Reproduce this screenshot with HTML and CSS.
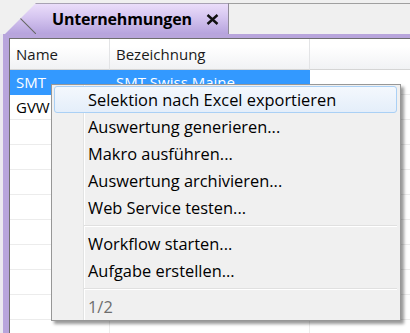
FILE: index.html
```html
<!DOCTYPE html>
<html lang="de">
<head>
    <meta charset="UTF-8">
    <title>Unternehmungen</title>
    <link rel="stylesheet" href="styles.css">
</head>
<body>
    <div class="window">
        <div class="tabbar">
            <div class="tab">
                <span class="tab-title">Unternehmungen</span>
                <svg class="tab-close" width="13" height="11" viewBox="0 0 13 11">
                    <path d="M1.5 1 L11.5 10 M11.5 1 L1.5 10" stroke="#111" stroke-width="2.4" fill="none"/>
                </svg>
            </div>
            <div class="tabbar-rest"></div>
        </div>
        <div class="frame">
            <div class="grid">
                <div class="cell head">Name</div>
                <div class="cell head">Bezeichnung</div>
                <div class="cell head filler"></div>

                <div class="cell selected">SMT</div>
                <div class="cell selected">SMT Swiss Maine</div>
                <div class="cell filler"></div>

                <div class="cell">GVW</div>
                <div class="cell">GVW Gesellschaft</div>
                <div class="cell filler"></div>

                <div class="cell"></div><div class="cell"></div><div class="cell filler"></div>
                <div class="cell"></div><div class="cell"></div><div class="cell filler"></div>
                <div class="cell"></div><div class="cell"></div><div class="cell filler"></div>
                <div class="cell"></div><div class="cell"></div><div class="cell filler"></div>
                <div class="cell"></div><div class="cell"></div><div class="cell filler"></div>
                <div class="cell"></div><div class="cell"></div><div class="cell filler"></div>
                <div class="cell"></div><div class="cell"></div><div class="cell filler"></div>
                <div class="cell"></div><div class="cell"></div><div class="cell filler"></div>
                <div class="cell"></div><div class="cell"></div><div class="cell filler"></div>
            </div>
        </div>

        <div class="menu">
            <div class="menu-item active">Selektion nach Excel exportieren</div>
            <div class="menu-item">Auswertung generieren...</div>
            <div class="menu-item">Makro ausführen...</div>
            <div class="menu-item">Auswertung archivieren...</div>
            <div class="menu-item">Web Service testen...</div>
            <div class="menu-sep"></div>
            <div class="menu-item">Workflow starten...</div>
            <div class="menu-item">Aufgabe erstellen...</div>
            <div class="menu-sep"></div>
            <div class="menu-item disabled">1/2</div>
        </div>
    </div>
</body>
</html>
```

FILE: styles.css
```css
body {
    margin: 0;
    background: #ebe9f0;
    font-family: "Open Sans", "Noto Sans", sans-serif;
    color: #000;
    overflow: hidden;
}

.window {
    position: relative;
    width: 410px;
    height: 333px;
}

/* Tab-Leiste */
.tabbar {
    display: flex;
    height: 34px;
    padding-left: 5px;
    background: #f0f0f0;
}

.tab {
    position: relative;
    display: flex;
    align-items: center;
    width: 224px;
    height: 31px;
    margin-top: 3px;
    padding-left: 47px;
    box-sizing: border-box;
    background: linear-gradient(#ecdffb, #d6c6f0 45%, #b6a3dd);
    clip-path: polygon(0 100%, 31px 0, 100% 0, 100% 100%);
    box-shadow: inset -1px 0 #8f8a98, inset 0 1px #a8a2b4;
}

.tab::before {
    content: '';
    position: absolute;
    left: 0;
    top: 0;
    width: 31px;
    height: 31px;
    background: linear-gradient(to top right, transparent calc(50% - 1px), #6b6b6b 50%, transparent calc(50% + 1px));
}

.tab-title {
    font-weight: bold;
    font-size: 16px;
    letter-spacing: -0.2px;
}

.tab-close {
    margin-left: 14px;
    margin-top: 2px;
}

.tabbar-rest {
    flex: 1;
    margin-top: 3px;
    border-top: 1px solid #a0a0a0;
}

/* Rahmen um die Tabelle */
.frame {
    margin-left: 3px;
    padding: 4px 0 0 6px;
    background: #b8a5dc;
    height: 299px;
    box-sizing: border-box;
}

.grid {
    display: grid;
    grid-template-columns: 100px 200px 1fr;
    grid-auto-rows: 25px;
    grid-template-rows: 31px;
    height: 100%;
    overflow: hidden;
    background: #fff;
    border-left: 1px solid #6e6e6e;
    border-top: 1px solid #6e6e6e;
    font-size: 15px;
}

.cell {
    display: flex;
    align-items: center;
    padding-left: 6px;
    border-right: 1px solid #ececec;
    border-bottom: 1px solid #ececec;
    white-space: nowrap;
    overflow: hidden;
}

.cell.filler {
    border-right: none;
}

.head {
    background: linear-gradient(#fff, #fff 25%, #f1f2f4);
    border-right-color: #e3e4e6;
    border-bottom-color: #d5d5d5;
    color: #1a1a1a;
}

.selected {
    background: #3399ff;
    color: #fff;
    border-right-color: #3399ff;
    border-bottom-color: #3399ff;
}

/* Kontextmenue */
.menu {
    position: absolute;
    left: 51px;
    top: 84px;
    width: 350px;
    padding: 1px 3px 0 2px;
    box-sizing: border-box;
    background: #f0f0f0 linear-gradient(to right, transparent 31px, #e2e3e3 31px, #e2e3e3 32px, #fff 32px, #fff 33px, transparent 33px) no-repeat;
    border: 1px solid #979797;
    box-shadow: 3px 3px 3px rgba(0, 0, 0, 0.4);
    font-size: 16.4px;
}

.menu-item {
    height: 27px;
    padding-left: 33px;
    display: flex;
    align-items: center;
    box-sizing: border-box;
    border: 1px solid transparent;
    border-radius: 3px;
    white-space: nowrap;
}

.menu-item.active {
    border-color: #aad0f5;
    background: linear-gradient(#f4f8fd, #e4eefa);
}

.menu-item.disabled {
    color: #6d6d6d;
}

.menu-sep {
    height: 9px;
    margin-left: 30px;
    background: linear-gradient(transparent 4px, #e0e0e0 4px, #e0e0e0 5px, #fff 5px, #fff 6px, transparent 6px);
}
```
